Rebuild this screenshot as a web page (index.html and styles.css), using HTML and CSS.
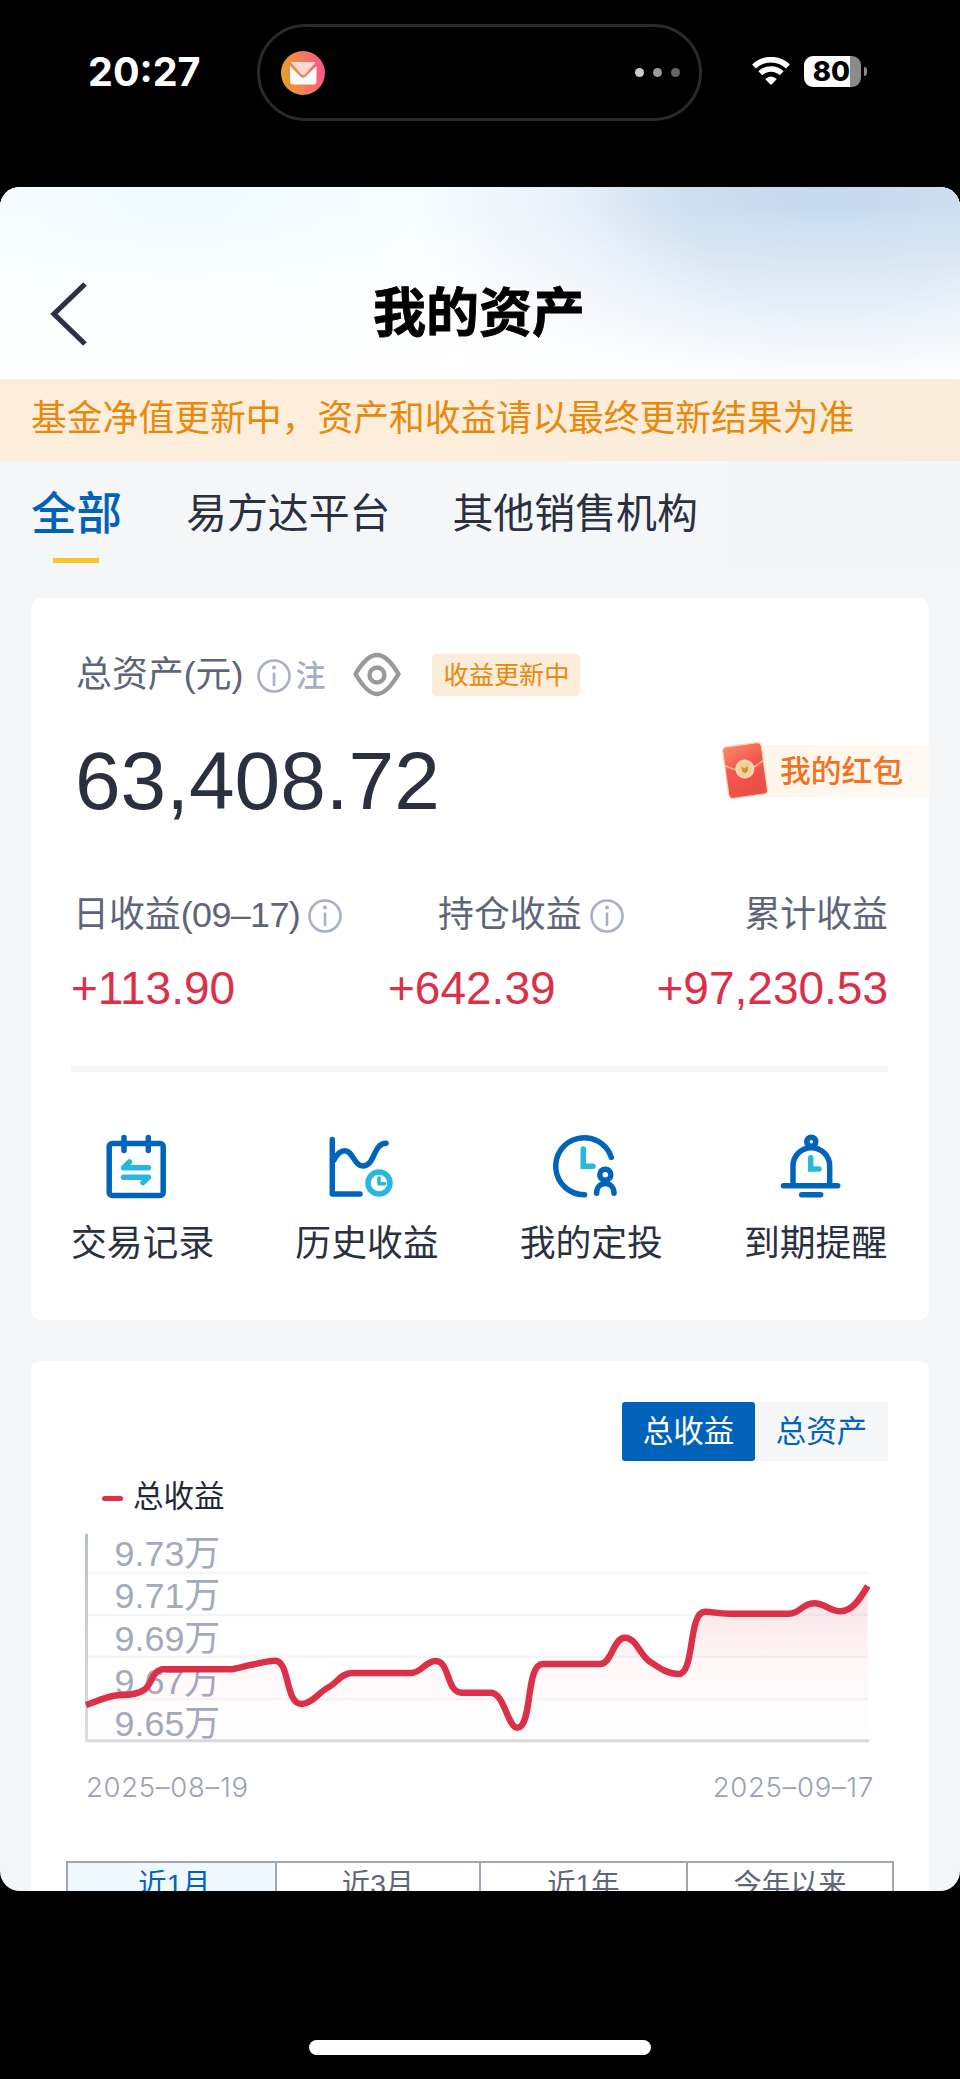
FILE: index.html
```html
<!DOCTYPE html>
<html lang="zh-CN">
<head>
  <meta charset="UTF-8" />
  <meta name="viewport" content="width=device-width, initial-scale=1.0"/>
  <title>我的资产</title>
  <link rel="stylesheet" href="styles.css">
</head>
<body>
  <div class="status-bar">
    <div class="time">20:27</div>
    <div class="island">
      <svg class="mail" width="44" height="44" viewBox="0 0 44 44">
        <defs>
          <linearGradient id="mailBg" x1="0" y1="0.6" x2="1" y2="0.4">
            <stop offset="0" stop-color="#e6a02c"/>
            <stop offset="0.5" stop-color="#f47e56"/>
            <stop offset="1" stop-color="#fd5488"/>
          </linearGradient>
        </defs>
        <circle cx="22" cy="22" r="22" fill="url(#mailBg)"/>
        <path d="M9 15 L20 26 Q22 27.500 24 26 L35.500 15 V30 Q35.500 33.500 32 33.500 H12.500 Q9 33.500 9 30 Z" fill="#fff"/>
        <path d="M10 11.500 Q10.500 11 12 11 H32.500 Q34 11 34.500 11.500 L24 23.500 Q22 25 20.500 23.500 Z" fill="#ffd9d3"/>
      </svg>
      <div class="dots"><i></i><i></i><i></i></div>
    </div>
    <svg class="wifi" width="38" height="28" viewBox="0 0 38 28">
      <g fill="none" stroke="#fff" stroke-width="5.600">
        <path d="M2 9.500 A24.500 24.500 0 0 1 36 9.500"/>
        <path d="M8.300 16.300 A15.500 15.500 0 0 1 29.700 16.300"/>
      </g>
      <path d="M13.200 22 Q19 17 24.800 22 L19.900 27.300 Q19 28.200 18.100 27.300 Z" fill="#fff"/>
    </svg>
    <div class="battery">80</div>
    <div class="battery-tip"></div>
  </div>

  <div class="sheet">
    <div class="header">
      <svg class="back" width="40" height="66" viewBox="0 0 40 66">
        <path d="M36 3 L5 33 L36 63" fill="none" stroke="#2b3244" stroke-width="5.200"/>
      </svg>
      <h1>我的资产</h1>
    </div>
    <div class="notice">基金净值更新中，资产和收益请以最终更新结果为准</div>
    <div class="tabs">
      <div class="tab active">全部</div>
      <div class="tab">易方达平台</div>
      <div class="tab">其他销售机构</div>
    </div>

    <div class="card assets">
      <div class="total-head">
        <span class="label">总资产(元)</span>
        <svg class="info" width="34" height="34" viewBox="0 0 34 34"><circle cx="17" cy="17" r="15.500"/><path d="M17 13.500 V27"/><circle class="dot" cx="17" cy="8.500" r="2"/></svg>
        <span class="note">注</span>
        <svg class="eye" width="48" height="46" viewBox="0 0 48 46" fill="none" stroke="#999" stroke-width="4.400">
          <path d="M2.500 22 C9 11 17 3 24 3 C31 3 39 11 45.500 22 C39 33 31 42 24 42 C17 42 9 33 2.500 22 Z" stroke-linejoin="round"/>
          <circle cx="24" cy="23" r="7.500"/>
        </svg>
        <span class="badge">收益更新中</span>
      </div>
      <div class="total-row">
        <div class="total">63,408.72</div>
        <div class="packet">
          <svg class="envelope" width="50" height="58" viewBox="0 0 50 58">
            <defs>
              <linearGradient id="env" x1="0" y1="0" x2="0.300" y2="1">
                <stop offset="0" stop-color="#fb8a6c"/>
                <stop offset="0.500" stop-color="#f4574d"/>
                <stop offset="1" stop-color="#ea4f49"/>
              </linearGradient>
            </defs>
            <g transform="rotate(-8 25 28)">
              <rect x="5.500" y="2.500" width="39" height="52" rx="4" fill="url(#env)" stroke="#fbd3a6" stroke-width="1.200"/>
              <path d="M6 21 Q25 35 44 21" fill="none" stroke="#fcc0a0" stroke-width="1.500"/>
              <circle cx="25" cy="27" r="9.500" fill="#f9d9b4"/>
              <circle cx="25" cy="27" r="7" fill="#f6cf94"/>
              <path d="M22 24 V29 L25 31.500 L28 29 V24 L25 26.500 Z" fill="#cf9536"/>
            </g>
          </svg>
          <span>我的红包</span>
        </div>
      </div>
      <div class="stats">
        <div class="stat">
          <div class="label first">日收益<span class="day">(09–17)</span><svg class="info" width="34" height="34" viewBox="0 0 34 34"><circle cx="17" cy="17" r="15.500"/><path d="M17 13.500 V27"/><circle class="dot" cx="17" cy="8.500" r="2"/></svg></div>
          <div class="value">+113.90</div>
        </div>
        <div class="stat middle">
          <div class="label">持仓收益<svg class="info" width="34" height="34" viewBox="0 0 34 34"><circle cx="17" cy="17" r="15.500"/><path d="M17 13.500 V27"/><circle class="dot" cx="17" cy="8.500" r="2"/></svg></div>
          <div class="value">+642.39</div>
        </div>
        <div class="stat last">
          <div class="label">累计收益</div>
          <div class="value">+97,230.53</div>
        </div>
      </div>
      <div class="divider"></div>
      <div class="menu">
        <div class="menu-item">
          <svg class="icon" width="66" height="70" viewBox="0 0 66 70">
            <rect x="4.200" y="11.500" width="54" height="52" rx="3"/>
            <path d="M19 5.500 V18.500 M43.300 5.500 V18.500"/>
            <path class="cyan" d="M43.500 35.700 H18.500 L24.500 30 M18.500 45.300 H43.500 L38 50.500"/>
          </svg>
          <span>交易记录</span>
        </div>
        <div class="menu-item">
          <svg class="icon" width="66" height="70" viewBox="0 0 66 70">
            <path d="M3.300 7.500 V62 H31"/>
            <path d="M5 28 C8 22 12 18.700 15.700 18.700 C24 18.700 25 34 34 34 C46 34 44 11.300 57 11.300"/>
            <circle class="cyan" cx="50" cy="51" r="11"/>
            <path class="cyan thin" d="M50 46 V51.800 H55.500"/>
          </svg>
          <span>历史收益</span>
        </div>
        <div class="menu-item">
          <svg class="icon" width="66" height="70" viewBox="0 0 66 70">
            <path d="M30.600 62.700 A28.500 28.500 0 1 1 57.300 25.300"/>
            <path class="cyan square" d="M29.300 17 V34.300 H39"/>
            <circle cx="51.300" cy="42.700" r="5.500"/>
            <path d="M42.600 61.300 C42.600 55 46.500 51.500 51.300 51.500 C56 51.500 60 55 60 61.300"/>
          </svg>
          <span>我的定投</span>
        </div>
        <div class="menu-item">
          <svg class="icon" width="66" height="70" viewBox="0 0 66 70">
            <circle cx="33.300" cy="9.700" r="4.500"/>
            <path d="M15 53 V34 A18.350 18.350 0 0 1 51.700 34 V53"/>
            <path d="M5.500 53.700 H59.700 M23.700 62.700 H42.700"/>
            <path class="cyan square" d="M32.700 25.700 V37 H41"/>
          </svg>
          <span>到期提醒</span>
        </div>
      </div>
    </div>

    <div class="card chart-card">
      <div class="switch">
        <div class="switch-item on">总收益</div>
        <div class="switch-item">总资产</div>
      </div>
      <div class="legend"><i></i>总收益</div>
      <svg class="chart" width="817" height="230" viewBox="71 1520 817 230">
        <defs>
          <linearGradient id="area" x1="0" y1="0" x2="0" y2="1">
            <stop offset="0" stop-color="#db3048" stop-opacity="0.150"/>
            <stop offset="0.500" stop-color="#db3048" stop-opacity="0.040"/>
            <stop offset="1" stop-color="#db3048" stop-opacity="0"/>
          </linearGradient>
          <linearGradient id="axis" gradientUnits="userSpaceOnUse" x1="0" y1="1534" x2="0" y2="1741">
            <stop offset="0" stop-color="#b4bdd2"/>
            <stop offset="0.300" stop-color="#c8cad0"/>
            <stop offset="1" stop-color="#dcdcde"/>
          </linearGradient>
        </defs>
        <g class="grid">
          <path d="M88 1572.700 H868 M88 1615 H868 M88 1656.700 H868 M88 1699 H868"/>
        </g>
        <path d="M85 1740.700 H869" stroke="#d9d9dc" stroke-width="3"/>
        <rect x="85" y="1534" width="3" height="208" fill="url(#axis)"/>
        <g class="scale">
          <text x="114.500" y="1565.500">9.73万</text>
          <text x="114.500" y="1608">9.71万</text>
          <text x="114.500" y="1651">9.69万</text>
          <text x="114.500" y="1693.500">9.67万</text>
          <text x="114.500" y="1736">9.65万</text>
        </g>
        <path id="fill" fill="url(#area)"/>
        <path id="line" class="line"/>
      </svg>
      <div class="dates"><span>2025–08–19</span><span>2025–09–17</span></div>
      <div class="ranges">
        <div class="range on">近1月</div>
        <div class="range">近3月</div>
        <div class="range">近1年</div>
        <div class="range">今年以来</div>
      </div>
    </div>
  </div>

  <div class="home-bar"></div>

  <script>
    // curve of the total profit, the area reuses the same path
    const curve = "M86 1705 C98 1701 107 1695.500 121 1695 C132 1695 138 1694 144 1690 C152 1685 152 1669.300 164 1669.300 " +
      "H228 C238 1669.300 243 1666 253 1664.500 C262 1663 267 1660.700 275 1660.700 C290 1660.700 285 1704 301.500 1704 " +
      "C312 1704 319 1692 328 1687.500 C336 1684 341 1673 352 1673 H411 C422 1673 425 1661 435.700 1661 " +
      "C450 1661 446 1692.700 462 1692.700 H491 C504 1692.700 508 1727.700 517.300 1727.700 " +
      "C533 1727.700 525 1664 543 1664 H600 C612 1664 613 1637.700 625 1637.700 C636 1637.700 640 1655 649 1661 " +
      "C658 1667 667 1674 678.500 1674 C695 1674 688 1611.700 705 1611.700 C713 1611.700 718 1613.700 729 1613.700 " +
      "H789 C800 1613.700 802 1603.300 814 1603.300 C825 1603.300 830 1611.300 840.700 1611.300 C852 1611.300 860 1599 867.700 1586";
    document.getElementById("line").setAttribute("d", curve);
    document.getElementById("fill").setAttribute("d", curve + " V1739 H86 Z");
  </script>
</body>
</html>
```
FILE: styles.css
```css
* { box-sizing: border-box; }
body { margin: 0; width: 960px; height: 2079px; background: #000; font-family: "Liberation Sans", "Noto Sans CJK SC", sans-serif; color: #2b3040; overflow: hidden; }
h1 { margin: 0; }
svg { display: block; flex: none; }

.status-bar { height: 187px; display: flex; align-items: flex-start; color: #fff; }
.time { width: 257px; padding: 48px 0 0 88px; font: 700 39.5px/48px Inter, sans-serif; }
.island { width: 445px; height: 97px; margin-top: 24px; border: 3.5px solid #2a2a2a; border-radius: 49px; display: flex; align-items: center; justify-content: space-between; padding: 0 19px 0 21px; }
.dots { display: flex; gap: 9px; }
.dots i { width: 9px; height: 9px; border-radius: 50%; background: #ccc; }
.dots i:nth-child(2) { background: #999; }
.dots i:nth-child(3) { background: #666; }
.wifi { margin: 57px 14px 0 50px; }
.battery { width: 57px; height: 31px; margin-top: 56px; padding-right: 2px; border-radius: 9px; background: linear-gradient(to right, #fff 46px, #8a8a8a 46px); color: #000; font: 800 27.5px/31px Inter, sans-serif; text-align: center; }
.battery-tip { width: 3px; height: 9px; margin: 67px 0 0 3px; border-radius: 0 3px 3px 0; background: #8a8a8a; }

.sheet { height: 1704px; border-radius: 20px; background: #f4f6f8; overflow: hidden; }
.header { height: 192px; padding: 62px 49px 0; display: flex; align-items: center;
  background: linear-gradient(to bottom, rgba(255,255,255,0) 10%, rgba(255,255,255,.88) 100%),
    radial-gradient(ellipse 420px 360px at 830px 0, #c6daee 0%, #cddff0 35%, rgba(226,236,247,.8) 62%, rgba(255,255,255,0) 100%),
    radial-gradient(ellipse 400px 240px at 180px 0, #f0fafe 0%, #f7fdff 60%, #fff 100%), #fff; }
.header h1 { flex: 1; margin-right: 42px; text-align: center; font-size: 53px; line-height: 70px; font-weight: 700; color: #000; -webkit-text-stroke: 0.8px #000; }
.notice { height: 82px; padding-left: 31px; font-size: 35.8px; line-height: 81px; color: #e8890c; background: linear-gradient(to right, #fdeddb 50%, #f9ecdb); white-space: nowrap; }
.tabs { height: 137px; padding: 26px 0 0 31px; display: flex; background: linear-gradient(to right, #f4f6f8 730px, #f4f5f8 730px) top / 100% 101px no-repeat; }
.tab { margin-right: 62px; font-size: 40.9px; line-height: 55px; white-space: nowrap; }
.tab.active { width: 93px; font-size: 45.5px; font-weight: 500; color: #0063b9; }
.tab.active::after { content: ""; display: block; width: 46px; height: 5px; margin: 16px 0 0 22px; background: #f7c52b; }

.card { margin: 0 31px; border-radius: 10px; background: #fff; }
.label { font-size: 35.9px; line-height: 44px; color: #5f6579; white-space: nowrap; }
.info { fill: none; stroke: #a9b0c6; stroke-width: 2.6; }
.info .dot { fill: #a9b0c6; stroke: none; }

.assets { height: 722px; padding: 52px 0 0 40px; }
.total-head { display: flex; align-items: center; height: 50px; padding-left: 5px; }
.total-head .info { margin: 1px 4px 0 14px; }
.note { font-size: 30px; line-height: 40px; margin: 2px 28px 0 0; color: #a3adc4; font-weight: 500; }
.eye { margin-right: 31px; }
.badge { width: 148px; height: 42px; border-radius: 4px; background: #fceddb; color: #e8890c; font-size: 25.2px; line-height: 42px; text-align: center; }
.total-row { display: flex; justify-content: space-between; margin-top: 28px; height: 106px; padding: 0 0 0 4px; }
.total { font-size: 82px; line-height: 106px; }
.packet { width: 207px; height: 52px; margin-top: 17px; display: flex; align-items: center; background: linear-gradient(to right, #fff 42px, #fff6ea 42px, #fff9f2); color: #f4711f; font-size: 30.8px; font-weight: 500; line-height: 52px; white-space: nowrap; }
.packet span { padding-top: 2px; }
.envelope { margin: 0 10px 0 -2px; }

.stats { display: flex; height: 167px; margin-top: 59px; padding-right: 41px; }
.stat { width: 317px; }
.stat .label { display: flex; align-items: center; }
.stat .info { margin: 2px 0 0 8px; }
.label.first { padding-left: 2px; }
.day { letter-spacing: -0.6px; }
.middle { width: 244px; }
.middle .label { padding-left: 50px; }
.middle .info { margin-left: 8px; }
.last { flex: 1; text-align: right; }
.last .label { justify-content: flex-end; }
.value { margin-top: 23px; font-size: 46px; line-height: 56px; color: #db3048; }
.divider { width: 817px; height: 6px; margin-top: 6px; background: #f3f5f8; }
.menu { width: 817px; margin-top: 60px; display: flex; justify-content: space-between; font-size: 35.8px; line-height: 50px; }
.menu-item { width: 144px; white-space: nowrap; }
.icon { margin: 0 0 17px 34px; overflow: visible; fill: none; stroke: #0064bb; stroke-width: 5.5; stroke-linecap: round; stroke-linejoin: round; }
.icon .cyan { stroke: #27b9dd; }
.icon .thin { stroke-width: 3.6; }
.icon .square { stroke-linejoin: miter; }

.chart-card { margin-top: 41px; height: 700px; padding: 41px 35px 0; }
.switch { display: flex; justify-content: flex-end; padding-right: 6px; }
.switch-item { width: 133px; height: 59px; border-radius: 3px; background: #f4f6f8; color: #0063b9; font-size: 30.5px; line-height: 58px; text-align: center; }
.switch-item.on { background: #0063b9; color: #fff; }
.legend { display: flex; align-items: center; height: 40px; margin: 15px 0 0 36px; font-size: 30.5px; line-height: 38px; color: #22283a; }
.legend i { width: 21px; height: 5px; margin: 4px 10px 0 0; border-radius: 3px; background: #db3048; }
.chart { margin: 4px 0 0 5px; }
.grid { stroke: #f5f5f7; stroke-width: 2.5; }
.scale { font-size: 35.9px; fill: #a3aabc; }
.line { fill: none; stroke: #db3048; stroke-width: 6.4; }
.dates { display: flex; justify-content: space-between; margin: 17px 20px 0 20px; font: 300 27.5px/40px Inter, sans-serif; letter-spacing: 0.7px; color: #9aa1b5; }
.ranges { display: grid; grid-template-columns: 209px 204px 207px 206px; width: 828px; margin-top: 54px; height: 70px; border: 2px solid #a0a6b8; border-width: 2px 0 0 2px; color: #5f6579; }
.range { border-right: 2px solid #a0a6b8; font-size: 28.3px; line-height: 43px; text-align: center; }
.range.on { padding-left: 6px; background: #eff7ff; color: #0063b9; }

.home-bar { width: 342px; height: 15px; margin: 149px auto 0; border-radius: 8px; background: #fff; }
```
